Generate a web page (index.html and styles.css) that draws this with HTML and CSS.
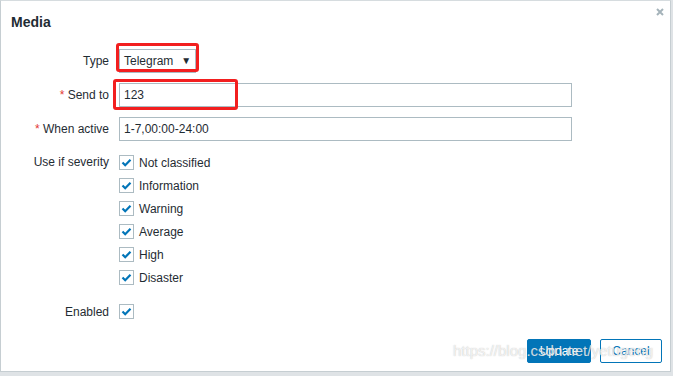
FILE: index.html
```html
<!DOCTYPE html>
<html>
<head>
<meta charset="utf-8">
<link rel="stylesheet" href="styles.css">
</head>
<body>
<div class="dialog">
  <div class="head">
    <h1 class="title">Media</h1>
    <span class="close"><svg width="8" height="8" viewBox="0 0 8 8"><path d="M1 1L7 7M7 1L1 7" stroke="#a5b3ba" stroke-width="2"/></svg></span>
  </div>
  <div class="form">
    <div class="row row-type">
      <div class="label">Type</div>
      <div class="select">Telegram<span class="arrow">▼</span></div>
    </div>
    <div class="row row-send">
      <div class="label"><span class="req">*</span> Send to</div>
      <div class="input">123</div>
    </div>
    <div class="row row-active">
      <div class="label"><span class="req">*</span> When active</div>
      <div class="input">1-7,00:00-24:00</div>
    </div>
    <div class="sev">
      <div class="label sev-label">Use if severity</div>
      <ul class="checks">
        <li class="check"><span class="cb"><svg width="13" height="13" viewBox="0 0 13 13"><path d="M2.5 6.5L5.2 9.2L10.5 3.8" fill="none" stroke="#0275b8" stroke-width="2.2"/></svg></span>Not classified</li>
        <li class="check"><span class="cb"><svg width="13" height="13" viewBox="0 0 13 13"><path d="M2.5 6.5L5.2 9.2L10.5 3.8" fill="none" stroke="#0275b8" stroke-width="2.2"/></svg></span>Information</li>
        <li class="check"><span class="cb"><svg width="13" height="13" viewBox="0 0 13 13"><path d="M2.5 6.5L5.2 9.2L10.5 3.8" fill="none" stroke="#0275b8" stroke-width="2.2"/></svg></span>Warning</li>
        <li class="check"><span class="cb"><svg width="13" height="13" viewBox="0 0 13 13"><path d="M2.5 6.5L5.2 9.2L10.5 3.8" fill="none" stroke="#0275b8" stroke-width="2.2"/></svg></span>Average</li>
        <li class="check"><span class="cb"><svg width="13" height="13" viewBox="0 0 13 13"><path d="M2.5 6.5L5.2 9.2L10.5 3.8" fill="none" stroke="#0275b8" stroke-width="2.2"/></svg></span>High</li>
        <li class="check"><span class="cb"><svg width="13" height="13" viewBox="0 0 13 13"><path d="M2.5 6.5L5.2 9.2L10.5 3.8" fill="none" stroke="#0275b8" stroke-width="2.2"/></svg></span>Disaster</li>
      </ul>
    </div>
    <div class="row row-enabled">
      <div class="label">Enabled</div>
      <span class="cb"><svg width="13" height="13" viewBox="0 0 13 13"><path d="M2.5 6.5L5.2 9.2L10.5 3.8" fill="none" stroke="#0275b8" stroke-width="2.2"/></svg></span>
    </div>
  </div>
  <div class="foot">
    <button class="btn btn-primary">Update</button>
    <button class="btn btn-alt">Cancel</button>
  </div>
  <div class="mark mark-type"></div>
  <div class="mark mark-send"></div>
  <div class="watermark">https://blog.csdn.net/yetugeng</div>
</div>
</body>
</html>
```
FILE: styles.css
```css
* { box-sizing: border-box; }
html, body { margin: 0; padding: 0; }
body {
  width: 673px;
  height: 376px;
  background: #dfe3e6;
  font-family: "Liberation Sans", Arial, sans-serif;
  font-size: 12px;
  color: #1f2c33;
  overflow: hidden;
}
.dialog {
  position: relative;
  width: 671px;
  height: 372px;
  background: #fff;
  border: 1px solid #c6ced2;
  border-top-color: #d6dcdf;
}
.head {
  height: 45px;
  padding: 13px 0 0 10px;
}
.title {
  margin: 0;
  font-size: 14px;
  line-height: 16px;
  font-weight: bold;
  color: #1f2c33;
}
.close {
  position: absolute;
  top: 7px;
  left: 655px;
  width: 8px;
  height: 8px;
  display: block;
  line-height: 0;
}
.form { display: flex; flex-direction: column; }
.row {
  display: flex;
  align-items: center;
  gap: 10px;
  height: 24px;
}
.label {
  width: 108px;
  text-align: right;
  line-height: 14px;
  flex: none;
}
.req { color: #e33734; }
.row-type { margin-top: 3px; }
.row-send { margin-top: 10px; }
.row-active { margin-top: 10px; }
.select {
  width: 77px;
  height: 24px;
  border: 1px solid #acbbc2;
  padding: 0 0 0 4px;
  display: flex;
  align-items: center;
  line-height: 14px;
}
.arrow {
  font-size: 10px;
  margin-left: 8px;
  color: #1f2c33;
}
.input {
  width: 453px;
  height: 24px;
  border: 1px solid #acbbc2;
  padding: 0 4px;
  display: flex;
  align-items: center;
  line-height: 14px;
}
.sev {
  display: flex;
  gap: 10px;
  margin-top: 10px;
}
.sev-label { padding-top: 4px; }
.checks { list-style: none; margin: 0; padding: 0; }
.check {
  display: flex;
  align-items: center;
  gap: 5px;
  height: 23px;
  line-height: 14px;
}
.cb {
  width: 15px;
  height: 15px;
  border: 1px solid #acbbc2;
  background: #fff;
  display: flex;
  align-items: center;
  justify-content: center;
  flex: none;
}
.row-enabled { margin-top: 11px; height: 23px; }
.foot {
  display: flex;
  justify-content: flex-end;
  gap: 9px;
  margin-top: 16px;
  padding-right: 8px;
}
.btn {
  height: 24px;
  font-family: "Liberation Sans", Arial, sans-serif;
  font-size: 12px;
  padding: 0;
  border: 1px solid #0275b8;
  border-radius: 2px;
}
.btn-primary { width: 64px; background: #0275b8; color: #fff; }
.btn-alt { width: 62px; background: #fff; color: #0275b8; }
.mark {
  position: absolute;
  border: 3px solid #f21f1f;
  border-radius: 3px;
}
.mark-type { left: 115px; top: 42px; width: 83px; height: 29px; }
.mark-send { left: 112px; top: 78px; width: 125px; height: 31px; }
.watermark {
  position: absolute;
  left: 452px;
  top: 341px;
  font-size: 15px;
  line-height: 18px;
  color: rgba(255,255,255,0.75);
  text-shadow: 0 0 1px rgba(120,120,120,0.5);
  white-space: nowrap;
}
```
